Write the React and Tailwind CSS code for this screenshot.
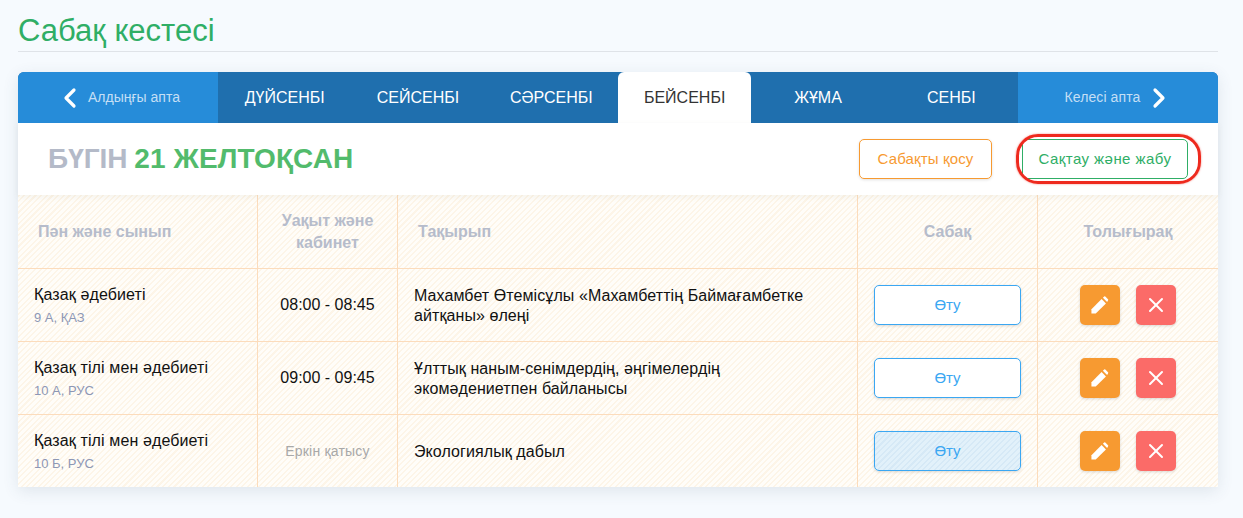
import { ChevronLeft, ChevronRight, X } from 'lucide-react'

const days = ['ДҮЙСЕНБІ', 'СЕЙСЕНБІ', 'СӘРСЕНБІ', 'БЕЙСЕНБІ', 'ЖҰМА', 'СЕНБІ']

const lessons = [
  {
    name: 'Қазақ әдебиеті',
    group: '9 А, ҚАЗ',
    time: '08:00 - 08:45',
    topic: 'Махамбет Өтемісұлы «Махамбеттің Баймағамбетке айтқаны» өлеңі',
  },
  {
    name: 'Қазақ тілі мен әдебиеті',
    group: '10 А, РУС',
    time: '09:00 - 09:45',
    topic: 'Ұлттық наным-сенімдердің, әңгімелердің экомәдениетпен байланысы',
  },
  {
    name: 'Қазақ тілі мен әдебиеті',
    group: '10 Б, РУС',
    time: 'Еркін қатысу',
    free: true,
    topic: 'Экологиялық дабыл',
    done: true,
  },
]

const gridCols = 'grid grid-cols-[240px_140px_460px_180px_180px]'
const cellBorder = 'border-r border-[#fcdcbc] last:border-r-0'

const PencilIcon = () => (
  <svg width="18" height="18" viewBox="0 0 20 20" fill="#fff">
    <path d="M0.5 14.7 L11.8 3.4 L16.6 8.2 L5.3 19.5 L0.5 19.5 Z" />
    <path d="M13.2 2 L14.6 0.6 Q15.2 0 15.9 0.6 L18.9 3.6 Q19.5 4.3 18.9 4.9 L17.9 6.8 Z" />
  </svg>
)

const App = () => {
  return (
    <div className="min-h-[518px] bg-[#f6fafe] pl-[18px] pt-[12px] font-['Liberation_Sans',sans-serif]">
      {/* Title */}
      <h1 className="h-[40px] w-[1200px] border-b border-[#dfe3e8] text-[31px] leading-[38px] text-[#2fae66]">Сабақ кестесі</h1>

      <div className="mt-[20px] w-[1200px] rounded-t-[6px] bg-white shadow-[0_4px_16px_rgba(60,80,110,0.12)]">
        {/* Week tabs */}
        <div className="flex h-[51px] overflow-hidden rounded-t-[6px] bg-[#1f6fae]">
          <div className="flex w-[200px] items-center justify-center gap-[2px] bg-[#268cd9] pr-[2px] text-[14px] text-[#c4dff5]">
            <ChevronLeft size={32} strokeWidth={2.4} className="text-white" />
            <span>Алдыңғы апта</span>
          </div>
          {days.map((day) => (
            <div
              key={day}
              className={
                day === 'БЕЙСЕНБІ'
                  ? 'flex flex-1 items-center justify-center rounded-t-[6px] bg-white text-[16px] text-[#333333]'
                  : 'flex flex-1 items-center justify-center text-[16px] text-white'
              }
            >
              {day}
            </div>
          ))}
          <div className="flex w-[200px] items-center justify-center gap-[3px] bg-[#268cd9] pl-[4px] text-[14px] tracking-[0.1px] text-[#c4dff5]">
            <span>Келесі апта</span>
            <ChevronRight size={32} strokeWidth={2.4} className="text-white" />
          </div>
        </div>

        {/* Date and actions */}
        <div className="relative z-10 flex h-[72px] items-center bg-white pl-[30px] pr-[30px] shadow-[0_2px_6px_rgba(120,110,90,0.08)]">
          <div className="text-[28px] font-bold text-[#b4bac8]">
            БҮГІН <span className="-ml-[1px] tracking-[0.1px] text-[#52bb6c]">21 ЖЕЛТОҚСАН</span>
          </div>
          <button className="ml-auto h-[40px] w-[133px] rounded-[5px] border border-[#f79a31] text-[15px] tracking-[0.15px] text-[#f79a31] shadow-[0_1px_3px_rgba(0,0,0,0.12)]">
            Сабақты қосу
          </button>
          <div className="relative ml-[30px]">
            <button className="block h-[40px] w-[166px] rounded-[5px] border border-[#2fae66] text-[15px] tracking-[0.45px] text-[#2fae66]">
              Сақтау және жабу
            </button>
            {/* red annotation ring */}
            <div className="absolute -bottom-[5px] -left-[6px] -right-[13px] -top-[5px] rounded-[22px] border-[3px] border-[#ee2a1e] shadow-[0_0_2px_rgba(238,42,30,0.6)]" />
          </div>
        </div>

        {/* Schedule table */}
        <div className="bg-[#fffdf9] bg-[repeating-linear-gradient(135deg,#fdf5e8_0px,#fdf5e8_1.5px,#fffdf9_1.5px,#fffdf9_4px)]">
          <div className={`${gridCols} h-[73px] items-stretch text-[16px] font-bold text-[#b6bccb]`}>
            <div className={`${cellBorder} flex items-center pl-[20px] pt-[1px]`}>Пән және сынып</div>
            <div className={`${cellBorder} flex items-center justify-center pt-[1px] text-center leading-[22px]`}>
              Уақыт және<br />кабинет
            </div>
            <div className={`${cellBorder} flex items-center pl-[20px] pt-[1px]`}>Тақырып</div>
            <div className={`${cellBorder} flex items-center justify-center pt-[1px]`}>Сабақ</div>
            <div className={`${cellBorder} flex items-center justify-center pt-[1px]`}>Толығырақ</div>
          </div>

          {lessons.map((lesson) => (
            <div key={lesson.group} className={`${gridCols} box-border h-[73px] border-t border-[#fcdcbc]`}>
              <div className={`${cellBorder} flex flex-col justify-center pl-[16px] pt-[1px]`}>
                <div className="text-[16px] leading-[20px] tracking-[0.12px] text-[#111111]">{lesson.name}</div>
                <div className="mt-[5px] text-[13px] leading-[16px] text-[#8d97b5]">{lesson.group}</div>
              </div>
              <div
                className={
                  lesson.free
                    ? `${cellBorder} flex items-center justify-center text-[14px] tracking-[0.2px] text-[#a8a8a8]`
                    : `${cellBorder} flex items-center justify-center text-[16px] text-[#111111]`
                }
              >
                {lesson.time}
              </div>
              <div className={`${cellBorder} flex items-center pl-[16px] pr-[40px] pt-[1px] text-[16px] leading-[20px] tracking-[0.08px] text-[#111111]`}>
                {lesson.topic}
              </div>
              <div className={`${cellBorder} flex items-center justify-center`}>
                <button
                  className={
                    lesson.done
                      ? 'h-[40px] w-[147px] rounded-[5px] border border-[#3ba7f2] bg-[repeating-linear-gradient(135deg,#d6e9f6_0px,#d6e9f6_1.5px,#e2f1fa_1.5px,#e2f1fa_4px)] text-[15px] text-[#3ba7f2] shadow-[0_1px_3px_rgba(0,0,0,0.15)]'
                      : 'h-[40px] w-[147px] rounded-[5px] border border-[#3ba7f2] bg-white text-[15px] text-[#3ba7f2] shadow-[0_1px_3px_rgba(0,0,0,0.15)]'
                  }
                >
                  Өту
                </button>
              </div>
              <div className="flex items-center justify-center gap-[16px]">
                <button className="flex h-[40px] w-[40px] items-center justify-center rounded-[5px] bg-[#f79a31] shadow-[0_1px_3px_rgba(0,0,0,0.15)]">
                  <PencilIcon />
                </button>
                <button className="flex h-[40px] w-[40px] items-center justify-center rounded-[5px] bg-[#fb6b68] shadow-[0_1px_3px_rgba(0,0,0,0.15)]">
                  <X size={24} strokeWidth={2} className="text-white" />
                </button>
              </div>
            </div>
          ))}
        </div>
      </div>
    </div>
  )
}

export default App
